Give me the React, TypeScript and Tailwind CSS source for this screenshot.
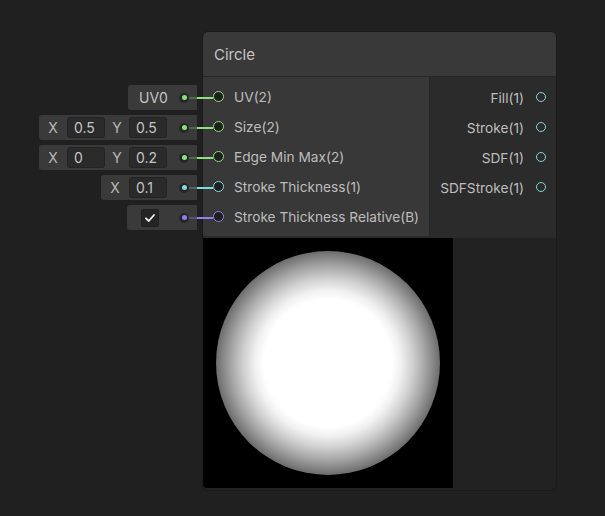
import type { ReactNode } from "react"

type Port = { label: string; color: string; dim: string }

const inputs: Port[] = [
  { label: "UV(2)", color: "#8de07e", dim: "#4d6a4a" },
  { label: "Size(2)", color: "#8de07e", dim: "#4d6a4a" },
  { label: "Edge Min Max(2)", color: "#8de07e", dim: "#4d6a4a" },
  { label: "Stroke Thickness(1)", color: "#82dadf", dim: "#4a6668" },
  { label: "Stroke Thickness Relative(B)", color: "#8f80ea", dim: "#57507a" },
]

const outputs = ["Fill(1)", "Stroke(1)", "SDF(1)", "SDFStroke(1)"]

function NumBox({ value }: { value: string }) {
  return (
    <div className="flex h-[21px] w-[38px] items-center rounded-[3px] border border-[#232323] bg-[#2a2a2a] pl-[6px] text-[14px] text-[#c4c4c4]">
      {value}
    </div>
  )
}

function Axis({ name, w }: { name: string; w: string }) {
  return <span className={`${w} text-center text-[14px] text-[#b8b8b8]`}>{name}</span>
}

function Field({ children, port }: { children: ReactNode; port: Port }) {
  return (
    <div className="relative flex h-[25px] items-center rounded-l-[3px] bg-[#3a3a3a] pr-[8px]">
      {children}
      <div className="relative z-10 flex h-[10px] w-[10px] items-center justify-center rounded-full bg-[#262626]">
        <div className="h-[5px] w-[5px] rounded-full" style={{ background: port.color }} />
      </div>
      <div className="absolute right-0 top-1/2 h-[2px] w-[8px] -translate-y-1/2" style={{ background: port.dim }} />
      <div className="absolute left-full top-1/2 z-10 h-[2px] w-[16px] -translate-y-1/2" style={{ background: port.color }} />
    </div>
  )
}

export default function App() {
  return (
    <div className="relative h-[516px] w-[605px] overflow-hidden bg-[#202020] font-['Inter',sans-serif]">
      <div className="absolute left-0 top-[31px] flex w-[557px] items-start">
        {/* property fields for inputs */}
        <div className="flex w-[202px] flex-col items-end gap-[5px] pr-[5px] pt-[54px]">
          <Field port={inputs[0]}>
            <span className="box-content w-[28px] pl-[11px] pr-[12px] text-[14px] text-[#c4c4c4]">UV0</span>
          </Field>
          <Field port={inputs[1]}>
            <Axis name="X" w="w-[28px]" />
            <NumBox value="0.5" />
            <Axis name="Y" w="w-[24px]" />
            <NumBox value="0.5" />
            <span className="w-[12px]" />
          </Field>
          <Field port={inputs[2]}>
            <Axis name="X" w="w-[28px]" />
            <NumBox value="0" />
            <Axis name="Y" w="w-[24px]" />
            <NumBox value="0.2" />
            <span className="w-[12px]" />
          </Field>
          <Field port={inputs[3]}>
            <Axis name="X" w="w-[28px]" />
            <NumBox value="0.1" />
            <span className="w-[12px]" />
          </Field>
          <Field port={inputs[4]}>
            <div className="ml-[14px] mr-[20px] flex h-[18px] w-[18px] items-center justify-center rounded-[2px] border border-[#1f1f1f] bg-[#242424]">
              <svg width="12" height="12" viewBox="0 0 12 12" fill="none">
                <path d="M2 6.3 4.8 9 10 3" stroke="#f0f0f0" strokeWidth="1.8" strokeLinecap="round" strokeLinejoin="round" />
              </svg>
            </div>
          </Field>
        </div>

        {/* node */}
        <div className="relative flex h-[460px] w-[355px] flex-col overflow-hidden rounded-[6px] border border-[#1a1a1a] bg-[#222222]">
          <div className="flex h-[45px] items-center border-b border-[#262626] bg-[#393939] pl-[11px] pt-[2px] text-[15px] text-[#c4c4c4]">
            Circle
          </div>
          <div className="flex h-[161px] border-b-2 border-[#2a2a2a]">
            <div className="flex w-[226px] flex-col bg-[#383838] pt-[4px]">
              {inputs.map((p) => (
                <div key={p.label} className="flex h-[30px] items-center gap-[10px] pl-[10px]">
                  <div className="h-[11px] w-[11px] rounded-full border-[1.5px] bg-[#1e1e1e]" style={{ borderColor: p.color }} />
                  <span className="whitespace-nowrap pt-[3px] text-[13.7px] text-[#bdbdbd]">{p.label}</span>
                </div>
              ))}
            </div>
            <div className="flex flex-1 flex-col border-l border-[#262626] bg-[#2b2b2b] pt-[5px]">
              {outputs.map((o) => (
                <div key={o} className="flex h-[30px] items-center justify-end gap-[12px] pr-[10px]">
                  <span className="whitespace-nowrap pt-[2px] text-[13.7px] text-[#bdbdbd]">{o}</span>
                  <div className="h-[10px] w-[10px] rounded-full border-[1.5px] border-[#7fd6dc]" />
                </div>
              ))}
            </div>
          </div>
          <div className="flex flex-1">
            <div className="flex h-[250px] w-[250px] items-center justify-center rounded-bl-[4px] bg-black">
              <div className="h-[224px] w-[224px] rounded-full bg-[radial-gradient(circle_closest-side,#ffffff_0%,#ffffff_57%,#f1f1f1_65%,#d2d2d2_75%,#a4a4a4_87%,#6c6c6c_100%)]" />
            </div>
          </div>
        </div>
      </div>
    </div>
  )
}
